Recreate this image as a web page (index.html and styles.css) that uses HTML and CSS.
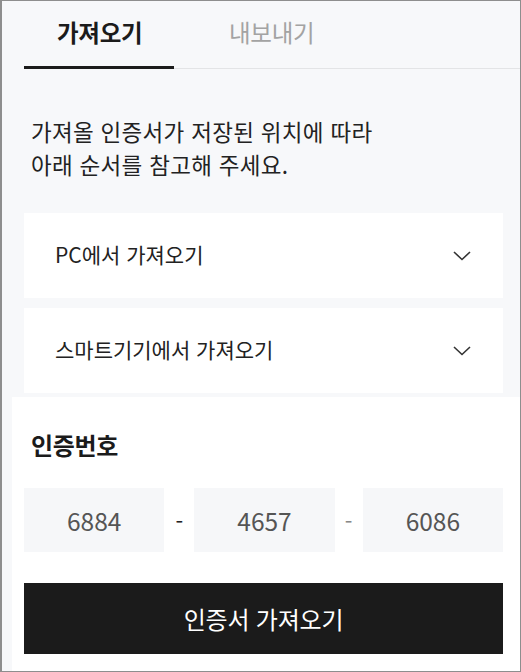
FILE: index.html
```html
<!DOCTYPE html>
<html lang="ko">
<head>
<meta charset="utf-8">
<title>인증서 가져오기</title>
<link rel="stylesheet" href="styles.css">
</head>
<body>
<div class="page">
  <nav class="tabs">
    <div class="tab active">가져오기</div>
    <div class="tab">내보내기</div>
  </nav>
  <div class="desc">
    <p class="desc-line">가져올 인증서가 저장된 위치에 따라</p>
    <p class="desc-line">아래 순서를 참고해 주세요.</p>
  </div>
  <div class="accordion">
    <div class="acc-item">
      <span class="acc-label">PC에서 가져오기</span>
      <svg class="chev" width="18" height="10" viewBox="0 0 18 10"><path d="M1 1 L9 8.5 L17 1" fill="none" stroke="#333" stroke-width="1.6"/></svg>
    </div>
    <div class="acc-item">
      <span class="acc-label">스마트기기에서 가져오기</span>
      <svg class="chev" width="18" height="10" viewBox="0 0 18 10"><path d="M1 1 L9 8.5 L17 1" fill="none" stroke="#333" stroke-width="1.6"/></svg>
    </div>
  </div>
  <section class="code-panel">
    <h2 class="code-title">인증번호</h2>
    <div class="code-row">
      <div class="code-box">6884</div>
      <div class="dash dark">-</div>
      <div class="code-box">4657</div>
      <div class="dash light">-</div>
      <div class="code-box">6086</div>
    </div>
    <button class="submit">인증서 가져오기</button>
  </section>
</div>
</body>
</html>
```

FILE: styles.css
```css
* { box-sizing: border-box; }
html, body { margin: 0; padding: 0; }
body {
  font-family: "Noto Sans CJK KR", "Noto Sans", sans-serif;
  background: #fff;
}
.page {
  width: 521px;
  height: 672px;
  border: 1px solid #8e8e8e;
  border-left-width: 2px;
  background: #f7f8fa;
  overflow: hidden;
  display: flex;
  flex-direction: column;
}
.tabs {
  display: flex;
  margin-left: 22px;
  height: 68px;
  box-shadow: inset 0 -1px 0 #e3e4e6;
}
.tab {
  height: 68px;
  padding: 0 20px 0 33px;
  font-size: 23.5px;
  line-height: 63px;
  color: #a3a3a3;
  letter-spacing: -0.3px;
  white-space: nowrap;
}
.tab.active {
  width: 150px;
  color: #1b1b1b;
  font-weight: 700;
  border-bottom: 3px solid #1b1b1b;
  margin-bottom: -1px;
}
.tab + .tab {
  padding-left: 55px;
}
.desc {
  margin: 46px 0 0 29px;
  display: flex;
  flex-direction: column;
}
.desc-line {
  margin: 0;
  font-size: 22.5px;
  line-height: 33px;
  color: #222;
  letter-spacing: 0.3px;
}
.accordion {
  margin: 32px 17px 0 22px;
  display: flex;
  flex-direction: column;
  gap: 10px;
}
.acc-item {
  height: 85px;
  background: #fff;
  display: flex;
  align-items: center;
  justify-content: space-between;
  padding: 0 32px 0 31px;
  font-size: 21px;
  color: #222;
}
.acc-label { padding-bottom: 4px; }
.chev { display: block; }
.code-panel {
  margin: 4px 0 0 10px;
  flex: 1;
  background: #fff;
  padding: 33px 17px 0 12px;
}
.code-title {
  margin: 0 0 0 7px;
  font-size: 24px;
  line-height: 30px;
  font-weight: 700;
  color: #1b1b1b;
  letter-spacing: -0.3px;
}
.code-row {
  margin-top: 28px;
  display: grid;
  grid-template-columns: 1fr 30px 1fr 28px 1fr;
  height: 64px;
}
.code-box {
  background: #f6f7f9;
  display: flex;
  align-items: center;
  justify-content: center;
  font-size: 24.5px;
  color: #555;
}
.dash {
  display: flex;
  align-items: center;
  justify-content: center;
  font-size: 22px;
}
.dash.dark { color: #222; }
.dash.light { color: #888; }
.submit {
  display: block;
  width: 100%;
  margin-top: 31px;
  height: 71px;
  border: 0;
  background: #1b1b1b;
  color: #fff;
  font-family: "Noto Sans CJK KR", "Noto Sans", sans-serif;
  font-size: 24px;
  letter-spacing: -0.2px;
}
```
